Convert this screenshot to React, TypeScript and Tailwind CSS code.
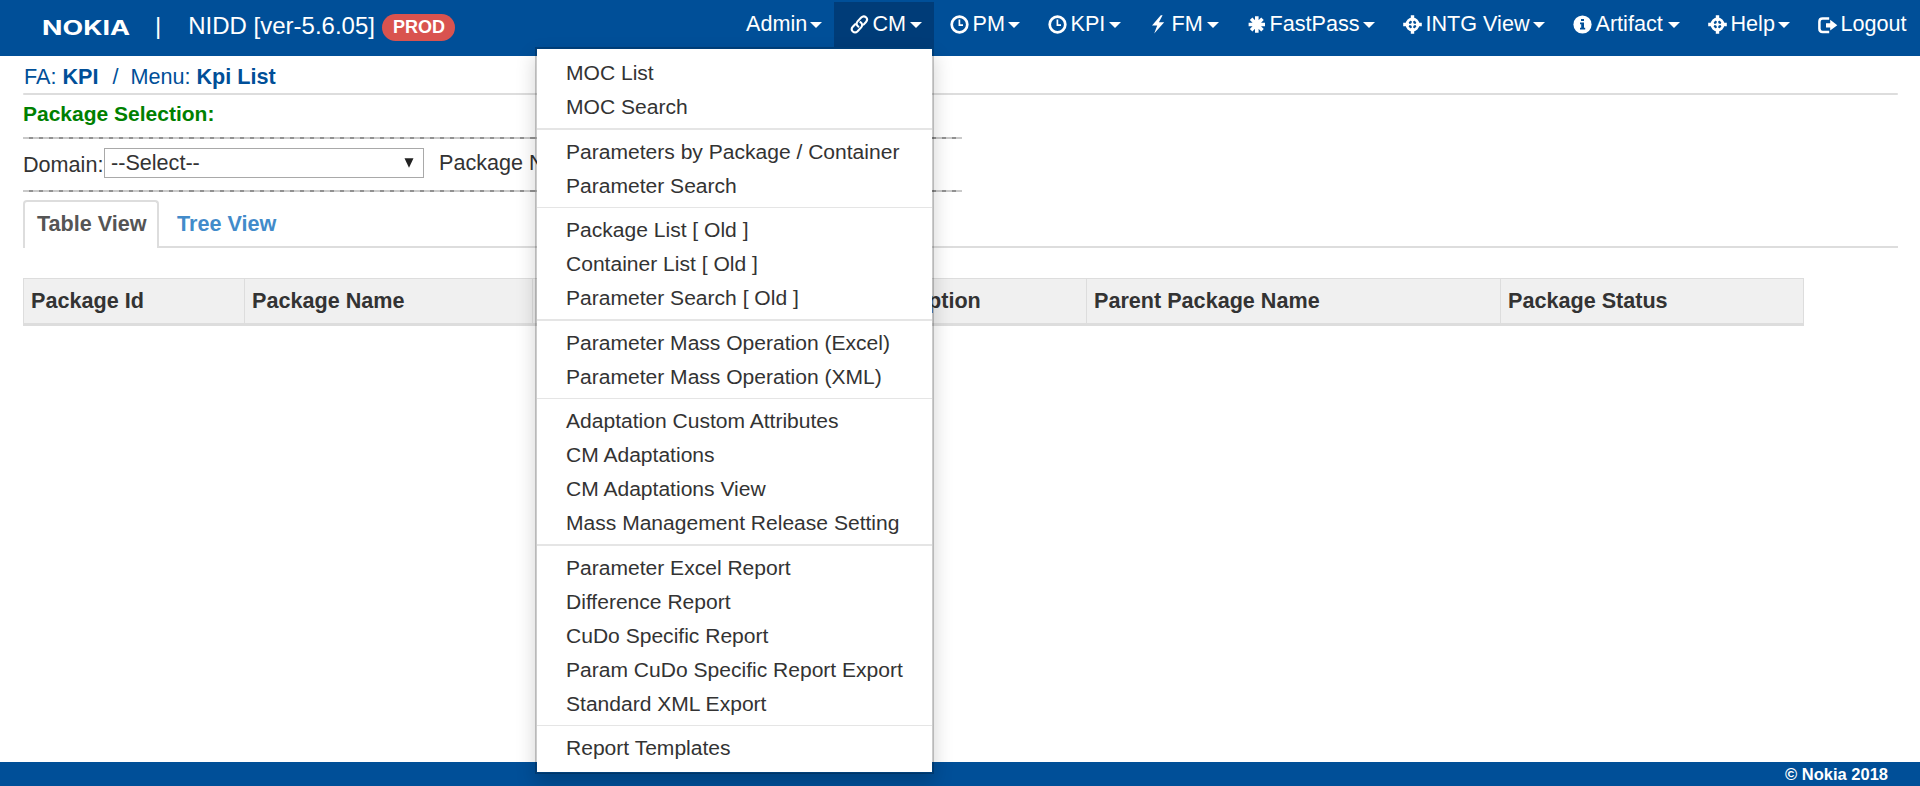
import React from "react";

const TimeIcon = () => (
  <svg viewBox="0 0 21 21" className="h-[21px] w-[21px]" fill="none" stroke="currentColor">
    <circle cx="10.5" cy="10.5" r="7.8" strokeWidth="2.7" />
    <path d="M10.4 5.5V11.2H14" strokeWidth="1.7" />
  </svg>
);

const LinkIcon = () => (
  <svg viewBox="0 0 21 21" className="h-[21px] w-[21px]" fill="none" stroke="currentColor" strokeWidth="2.1" strokeLinecap="round">
    <path d="M9.4 12.6C7.2 11.2 7.2 9 8.6 7.4L12.2 3.6C13.6 2.2 15.6 2.1 17 3.3C18.4 4.7 18.3 6.6 17 8L14.6 10.6" />
    <path d="M11.4 8.2C13.6 9.6 13.6 11.8 12.2 13.4L8.6 17.2C7.2 18.6 5.2 18.7 3.8 17.5C2.4 16.1 2.5 14.2 3.8 12.8L6.2 10.2" />
  </svg>
);

const FlashIcon = () => (
  <svg viewBox="0 0 21 21" className="h-[21px] w-[21px]" fill="currentColor">
    <path d="M12.8 1.2L4 11.6H9.2L6.2 19.6L16.2 8.3H10.9L14.6 1.2Z" />
  </svg>
);

const AsteriskIcon = () => (
  <svg viewBox="0 0 21 21" className="h-[21px] w-[21px]" stroke="currentColor" strokeWidth="3.6">
    <path d="M10.8 2.3V18.7M2.6 10.5H19M5.1 4.8L16.5 16.2M16.5 4.8L5.1 16.2" />
  </svg>
);

const ScreenshotIcon = () => (
  <svg viewBox="0 0 21 21" className="h-[21px] w-[21px]" fill="none" stroke="currentColor">
    <circle cx="10.5" cy="10.5" r="5.6" strokeWidth="2.6" />
    <path d="M10.5 1.2V7M10.5 14V19.8M1.2 10.5H7M14 10.5H19.8" strokeWidth="3.4" />
    <path d="M10.5 9.2L11.8 10.5L10.5 11.8L9.2 10.5Z" fill="currentColor" strokeWidth="1.2" />
    <path d="M10.5 6V15M6 10.5H15" strokeWidth="1.6" />
  </svg>
);

const InfoIcon = () => (
  <svg viewBox="0 0 21 21" className="h-[21px] w-[21px]">
    <circle cx="10.5" cy="10.5" r="9.1" fill="currentColor" />
    <path d="M9 4.9H12V7.1H9ZM8 8.6H12V13.8H13.2V15.4H8V13.8H9.2V10.2H8Z" fill="#004f98" />
  </svg>
);

const LogoutIcon = () => (
  <svg viewBox="0 0 21 21" className="h-[21px] w-[21px]">
    <path d="M12.2 4.6H5.6Q2.4 4.6 2.4 7.8V14.8Q2.4 18 5.6 18H12.2" fill="none" stroke="currentColor" strokeWidth="2.5" />
    <path d="M9 9.2H13.2V5.8L20.3 11.3L13.2 16.6V13.6H9Z" fill="currentColor" />
  </svg>
);

type NavItem = { label: string; width: string; icon?: React.ReactNode; active?: boolean; caret?: boolean };

const navItems: NavItem[] = [
  { label: "Admin", width: "w-[105px]" },
  { label: "CM", width: "w-[100px]", icon: <LinkIcon />, active: true },
  { label: "PM", width: "w-[98px]", icon: <TimeIcon /> },
  { label: "KPI", width: "w-[101px]", icon: <TimeIcon /> },
  { label: "FM", width: "w-[98px]", icon: <FlashIcon /> },
  { label: "FastPass", width: "w-[156px]", icon: <AsteriskIcon /> },
  { label: "INTG View", width: "w-[170px]", icon: <ScreenshotIcon /> },
  { label: "Artifact", width: "w-[135px]", icon: <InfoIcon /> },
  { label: "Help", width: "w-[110px]", icon: <ScreenshotIcon /> },
  { label: "Logout", width: "w-[118px]", icon: <LogoutIcon />, caret: false },
];

const menuGroups: string[][] = [
  ["MOC List", "MOC Search"],
  ["Parameters by Package / Container", "Parameter Search"],
  ["Package List [ Old ]", "Container List [ Old ]", "Parameter Search [ Old ]"],
  ["Parameter Mass Operation (Excel)", "Parameter Mass Operation (XML)"],
  ["Adaptation Custom Attributes", "CM Adaptations", "CM Adaptations View", "Mass Management Release Setting"],
  ["Parameter Excel Report", "Difference Report", "CuDo Specific Report", "Param CuDo Specific Report Export", "Standard XML Export"],
  ["Report Templates"],
];

const columns = [
  { label: "Package Id", width: "w-[221px]" },
  { label: "Package Name", width: "w-[288px]" },
  { label: "", width: "w-[322px]" },
  { label: "Description", width: "w-[232px]" },
  { label: "Parent Package Name", width: "w-[414px]" },
  { label: "Package Status", width: "w-[304px]" },
];

function DashedRule() {
  return (
    <div className="h-[2px] w-[939px] bg-[repeating-linear-gradient(90deg,#c9c9c9_0px,#c9c9c9_6px,#919191_6px,#919191_10.03px)]" />
  );
}

function CmMenu() {
  return (
    <ul className="absolute top-[47px] right-0 z-10 w-[399px] border-2 border-black/20 bg-white bg-clip-padding py-[7px] text-[21px] text-[#333] shadow-[0_9px_18px_rgba(0,0,0,0.175)]">
      {menuGroups.map((group, i) => (
        <React.Fragment key={group[0]}>
          {i > 0 && (
            <li className={i % 2 === 1 ? "mt-1 mb-[5px] h-[2px] bg-[#e5e5e5]" : "mt-1 mb-[5px] h-px bg-[#e5e5e5]"} />
          )}
          {group.map((label) => (
            <li key={label} className="h-[34px] pl-[29px] text-[21.05px] leading-[34px] whitespace-nowrap">
              {label}
            </li>
          ))}
        </React.Fragment>
      ))}
    </ul>
  );
}

function Header() {
  return (
    <header className="flex h-[56px] justify-between bg-[#004f98] text-white">
      <div className="flex h-[56px]">
        <svg className="ml-[42px] h-[56px] w-[90px]" viewBox="0 0 90 56">
          <text x="0" y="35" textLength="88" lengthAdjust="spacingAndGlyphs" className="fill-white font-['Inter',sans-serif] text-[19.5px] font-bold">
            NOKIA
          </text>
        </svg>
        <span className="ml-[23px] text-[24px] leading-[52px]">|</span>
        <span className="ml-[27px] text-[24px] leading-[51px] whitespace-nowrap">NIDD [ver-5.6.05]</span>
        <span className="mt-[14px] ml-[7.5px] h-[27px] w-[73px] rounded-full bg-[#d9534f] text-center text-[18px] leading-[26px] font-bold">
          PROD
        </span>
      </div>
      <nav className="flex">
        {navItems.map((item) => (
          <div key={item.label} className={`relative ${item.width}`}>
            <div className={`mt-[2px] flex h-[45px] items-start ${item.active ? "bg-[#003c78]" : ""}`}>
              {item.icon && <span className="mt-[11.5px] ml-[15px] w-[23.5px] shrink-0">{item.icon}</span>}
              <span className={`leading-[43px] whitespace-nowrap ${item.icon ? "" : "ml-[17px]"}`}>{item.label}</span>
              {item.caret !== false && (
                <span className="mt-[20px] mr-[12px] ml-auto border-x-6 border-t-6 border-x-transparent border-t-white" />
              )}
            </div>
            {item.active && <CmMenu />}
          </div>
        ))}
      </nav>
    </header>
  );
}

export default function App() {
  return (
    <div className="flex h-[786px] w-[1920px] flex-col overflow-hidden bg-white font-['Liberation_Sans',Arial,sans-serif] text-[21.6px] text-[#333]">
      <Header />
      <main className="mr-[22px] ml-[23px] flex-1">
        <div className="h-[37px] pt-[2px] pl-px leading-[37px] whitespace-pre text-[#004f98]">
          FA: <b>KPI</b>
          <span className="pr-[12px] pl-[14px]">/</span>Menu: <b>Kpi List</b>
        </div>
        <div className="h-[2px] rounded-full bg-[#ddd]" />
        <div className="h-[42px] text-[21px] leading-[37px] font-bold text-[#008000]">Package Selection:</div>
        <DashedRule />
        <div className="flex h-[51px] items-start">
          <span className="w-[81px] leading-[51px]">Domain:</span>
          <div className="mt-[9px] flex h-[30px] w-[320px] items-start justify-between border border-[#a9a9a9] pr-[9px] pl-[6px]">
            <span className="leading-[27px]">--Select--</span>
            <svg viewBox="0 0 10 10" className="mt-[9px] h-[10px] w-[10px]" fill="#222">
              <path d="M0.5 0.3H9.5L5 9.7Z" />
            </svg>
          </div>
          <span className="ml-[15px] leading-[47px]">Package Name:</span>
        </div>
        <DashedRule />
        <div className="mt-2 flex h-[48px] leading-[43px] font-bold">
          <div className="w-[136px] rounded-t-[4px] border-x-2 border-t-2 border-[#ddd] pl-[12px] text-[#555]">Table View</div>
          <div className="flex-1 border-b-2 border-[#ddd] pt-[2px] pl-[18px] text-[#428bca]">Tree View</div>
        </div>
        <div className="mt-[30px] flex h-[48px] w-[1781px] border-t border-r border-b-3 border-[#ddd] bg-[#f0f0f0] leading-[43px] font-bold">
          {columns.map((col, i) => (
            <div key={i} className={`shrink-0 border-l border-[#ddd] pl-[7px] whitespace-nowrap ${col.width}`}>
              {col.label}
            </div>
          ))}
        </div>
      </main>
      <footer className="h-[24px] bg-[#004f98] pr-[32px] text-right text-[16.5px] leading-[25px] font-bold text-white">
        © Nokia 2018
      </footer>
    </div>
  );
}
